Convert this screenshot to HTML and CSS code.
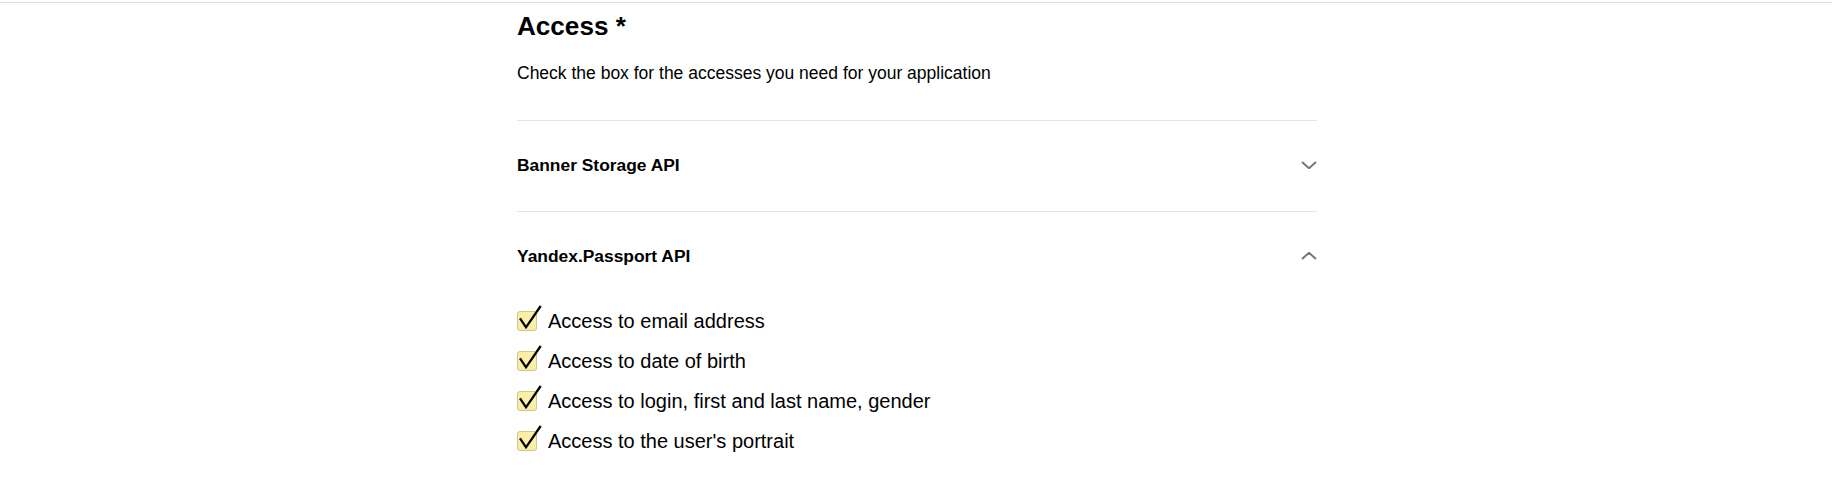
FILE: index.html
```html
<!DOCTYPE html>
<html lang="en">
<head>
<meta charset="utf-8">
<title>Access</title>
<link rel="stylesheet" href="styles.css">
</head>
<body>
<div class="topline"></div>
<div class="wrap">
  <main class="content">
    <h1 class="title">Access *</h1>
    <p class="subtitle">Check the box for the accesses you need for your application</p>

    <section class="group">
      <div class="group-head">
        <span class="group-name">Banner Storage API</span>
        <svg class="chev" width="16" height="8" viewBox="0 0 16 8"><path d="M1 1 L8 7.2 L15 1" fill="none" stroke="#777" stroke-width="2"/></svg>
      </div>
    </section>

    <section class="group">
      <div class="group-head">
        <span class="group-name">Yandex.Passport API</span>
        <svg class="chev" width="16" height="8" viewBox="0 0 16 8"><path d="M1 7 L8 0.8 L15 7" fill="none" stroke="#777" stroke-width="2"/></svg>
      </div>
      <ul class="items">
        <li class="item"><span class="box"><svg class="tick" width="28" height="30" viewBox="0 0 28 30"><path d="M3 15.3 L9 24.3 L23.7 3" fill="none" stroke="#000" stroke-width="2.3"/></svg></span><span class="label">Access to email address</span></li>
        <li class="item"><span class="box"><svg class="tick" width="28" height="30" viewBox="0 0 28 30"><path d="M3 15.3 L9 24.3 L23.7 3" fill="none" stroke="#000" stroke-width="2.3"/></svg></span><span class="label">Access to date of birth</span></li>
        <li class="item"><span class="box"><svg class="tick" width="28" height="30" viewBox="0 0 28 30"><path d="M3 15.3 L9 24.3 L23.7 3" fill="none" stroke="#000" stroke-width="2.3"/></svg></span><span class="label">Access to login, first and last name, gender</span></li>
        <li class="item"><span class="box"><svg class="tick" width="28" height="30" viewBox="0 0 28 30"><path d="M3 15.3 L9 24.3 L23.7 3" fill="none" stroke="#000" stroke-width="2.3"/></svg></span><span class="label">Access to the user's portrait</span></li>
      </ul>
    </section>
  </main>
</div>
</body>
</html>
```

FILE: styles.css
```css
html, body {
  margin: 0;
  padding: 0;
  background: #fff;
}

body {
  font-family: "Liberation Sans", Arial, sans-serif;
  color: #000;
}

.topline {
  margin-top: 2px;
  height: 1px;
  background: #dcdcdc;
}

.wrap {
  display: flex;
  justify-content: center;
  padding-left: 2px;
}

.content {
  width: 800px;
}

.title {
  margin: 8px 0 0;
  font-size: 26.1px;
  line-height: 30px;
  font-weight: bold;
}

.subtitle {
  margin: 20px 0 0;
  font-size: 17.5px;
  line-height: 24px;
}

.group {
  border-top: 1px solid #e4e4e4;
}

.group:first-of-type {
  margin-top: 35px;
}

.group-head {
  display: flex;
  align-items: center;
  justify-content: space-between;
  padding: 34px 0 36px;
}

.group-name {
  font-size: 17.4px;
  line-height: 20px;
  font-weight: bold;
}

.chev {
  display: block;
}

.items {
  list-style: none;
  margin: 0;
  padding: 2px 0 0;
  display: flex;
  flex-direction: column;
  gap: 6px;
}

.item {
  display: flex;
  align-items: flex-start;
  gap: 11px;
  font-size: 20px;
  line-height: 34px;
}

.box {
  position: relative;
  flex: none;
  box-sizing: border-box;
  width: 20px;
  height: 20px;
  margin-top: 7px;
  border: 1px solid #d2c68a;
  border-radius: 3px;
  background: #f9eea6;
}

.tick {
  position: absolute;
  left: -1px;
  top: -9px;
}
```
